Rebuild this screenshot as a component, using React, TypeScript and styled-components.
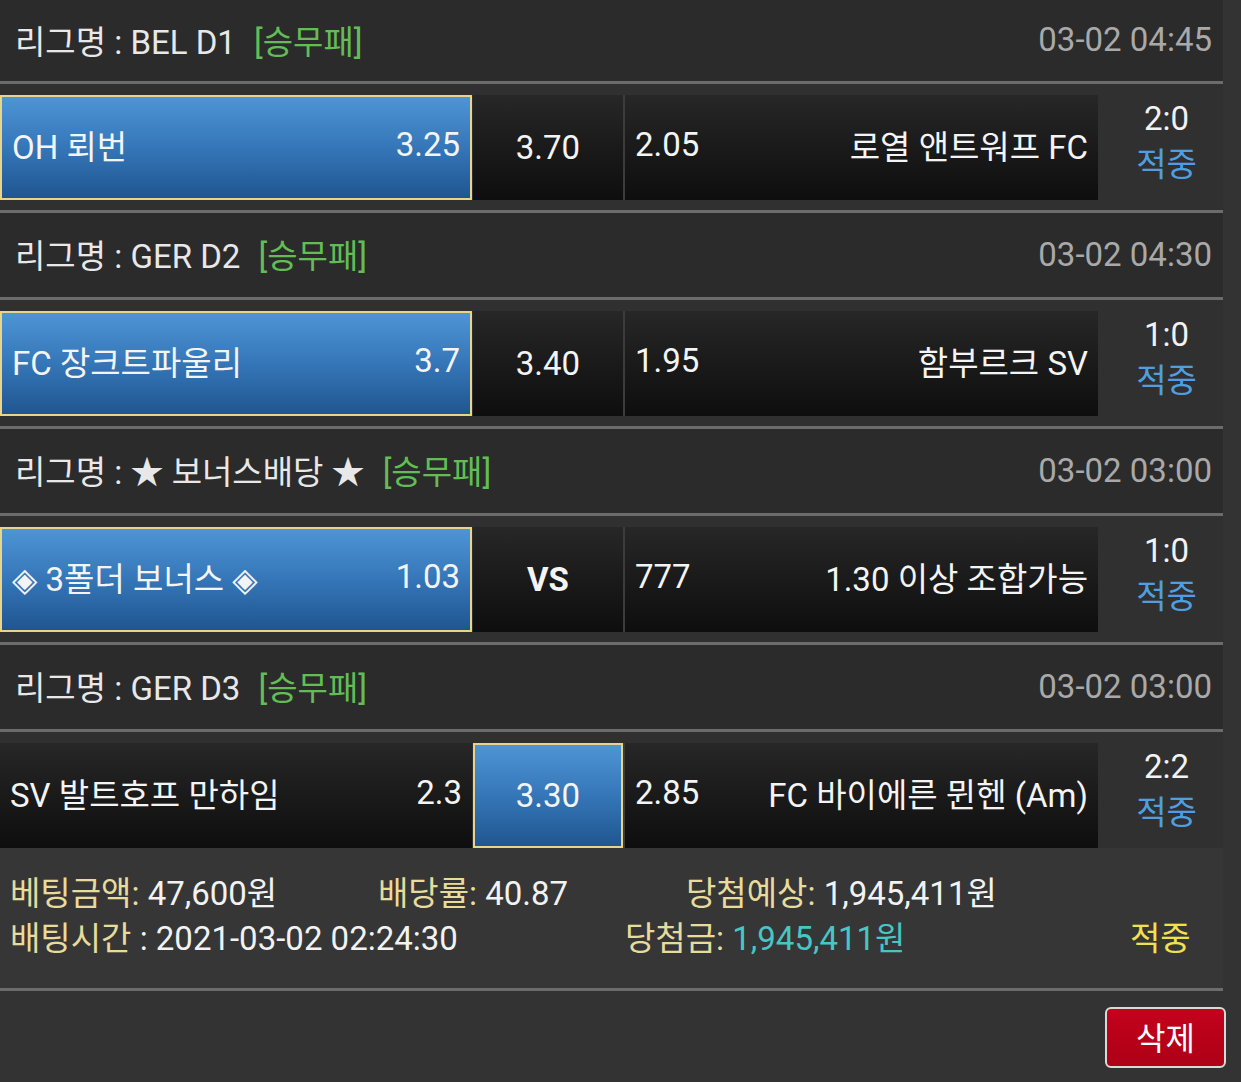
import React from 'react';
import styled, { createGlobalStyle } from 'styled-components';

const GlobalStyle = createGlobalStyle`
  body {
    margin: 0;
    background: #333333;
    font-family: Roboto, "Noto Sans CJK KR", "DejaVu Sans", sans-serif;
    color: #ececec;
  }
`;

const Page = styled.div`
  width: 1241px;
  height: 1082px;
  overflow: hidden;
  background: #333333;
  font-size: 33px;
`;

const Panel = styled.div`
  width: 1223px;
`;

const LeagueHeader = styled.div`
  height: 87px;
  box-sizing: border-box;
  background: #2b2b2b;
  border-bottom: 3px solid #6c6c6c;
  display: flex;
  align-items: center;
  justify-content: space-between;
  padding: 0 11px 2px 15px;
  &:first-child {
    height: 84px;
  }
`;

const LeagueName = styled.span`
  color: #e8e8e8;
  white-space: pre;
`;

const BetType = styled.span`
  color: #62bd55;
  margin-left: 18px;
`;

const MatchTime = styled.span`
  color: #a9a9a9;
`;

const MatchRow = styled.div<{ $last?: boolean }>`
  display: flex;
  padding: 11px 0 ${p => (p.$last ? '0' : '10px')};
  background: #303030;
  border-bottom: ${p => (p.$last ? 'none' : '3px solid #6c6c6c')};
`;

const OddsCell = styled.div<{ $selected?: boolean; $width: number; $align: 'between' | 'center' }>`
  width: ${p => p.$width}px;
  height: 105px;
  box-sizing: border-box;
  display: flex;
  align-items: center;
  justify-content: ${p => (p.$align === 'center' ? 'center' : 'space-between')};
  padding: 0 10px 6px;
  color: #f4f4f4;
  white-space: nowrap;
  background: ${p =>
    p.$selected
      ? 'linear-gradient(180deg, #4e95d6 0%, #3576b8 50%, #1f5690 100%)'
      : 'linear-gradient(180deg, #272727 0%, #1a1a1a 50%, #0e0e0e 100%)'};
  border: ${p => (p.$selected ? '2px solid #e9d48c' : 'none')};
`;

const AwayCell = styled(OddsCell)`
  border-left: 2px solid #3c3c3c;
`;

const Gap = styled.div`
  width: 1px;
`;

const DrawText = styled.span<{ $bold?: boolean }>`
  font-weight: ${p => (p.$bold ? 700 : 400)};
  padding-top: 6px;
`;

const ScoreCell = styled.div`
  flex: 1;
  display: flex;
  flex-direction: column;
  align-items: center;
  justify-content: center;
  padding: 0 0 12px 12px;
  line-height: 46px;
`;

const Score = styled.span`
  color: #f2f2f2;
`;

const Hit = styled.span`
  color: #4f9fe0;
`;

const Summary = styled.div`
  background: #363636;
  padding: 23px 0 27px 10px;
  border-bottom: 3px solid #6c6c6c;
  line-height: 45px;
`;

const SummaryLine = styled.div<{ $cols: string }>`
  display: grid;
  grid-template-columns: ${p => p.$cols};
  white-space: nowrap;
`;

const Label = styled.span`
  color: #e7dc9c;
`;

const Value = styled.span<{ $tone?: 'cyan' }>`
  color: ${p => (p.$tone === 'cyan' ? '#47c6c4' : '#f2f2f2')};
`;

const HitYellow = styled.span`
  color: #f1e14c;
`;

const Footer = styled.div`
  display: flex;
  justify-content: flex-end;
  padding: 16px 15px 0 0;
`;

const DeleteButton = styled.button`
  width: 121px;
  height: 61px;
  box-sizing: border-box;
  border: 2px solid #d9d9d9;
  border-radius: 6px;
  background: linear-gradient(180deg, #c4021d 0%, #ad0016 100%);
  color: #ffffff;
  font-family: inherit;
  font-size: 32px;
  padding: 0 0 4px;
`;

type Match = {
  league: string;
  time: string;
  home: string;
  homeOdds: string;
  draw: string;
  drawBold?: boolean;
  awayOdds: string;
  away: string;
  score: string;
  pick: 'home' | 'draw';
};

const matches: Match[] = [
  { league: '리그명 : BEL D1', time: '03-02 04:45', home: 'OH 뢰번', homeOdds: '3.25', draw: '3.70', awayOdds: '2.05', away: '로열 앤트워프 FC', score: '2:0', pick: 'home' },
  { league: '리그명 : GER D2', time: '03-02 04:30', home: 'FC 장크트파울리', homeOdds: '3.7', draw: '3.40', awayOdds: '1.95', away: '함부르크 SV', score: '1:0', pick: 'home' },
  { league: '리그명 : ★ 보너스배당 ★', time: '03-02 03:00', home: '◈ 3폴더 보너스 ◈', homeOdds: '1.03', draw: 'VS', drawBold: true, awayOdds: '777', away: '1.30 이상 조합가능', score: '1:0', pick: 'home' },
  { league: '리그명 : GER D3', time: '03-02 03:00', home: 'SV 발트호프 만하임', homeOdds: '2.3', draw: '3.30', awayOdds: '2.85', away: 'FC 바이에른 뮌헨 (Am)', score: '2:2', pick: 'draw' },
];

export default function App() {
  return (
    <Page>
      <GlobalStyle />
      <Panel>
        {matches.map((m, i) => (
          <React.Fragment key={i}>
            <LeagueHeader>
              <span>
                <LeagueName>{m.league}</LeagueName>
                <BetType>[승무패]</BetType>
              </span>
              <MatchTime>{m.time}</MatchTime>
            </LeagueHeader>
            <MatchRow $last={i === matches.length - 1}>
              <OddsCell $width={472} $align="between" $selected={m.pick === 'home'}>
                <span>{m.home}</span>
                <span>{m.homeOdds}</span>
              </OddsCell>
              <Gap />
              <OddsCell $width={150} $align="center" $selected={m.pick === 'draw'}>
                <DrawText $bold={m.drawBold}>{m.draw}</DrawText>
              </OddsCell>
              <AwayCell $width={475} $align="between">
                <span>{m.awayOdds}</span>
                <span>{m.away}</span>
              </AwayCell>
              <ScoreCell>
                <Score>{m.score}</Score>
                <Hit>적중</Hit>
              </ScoreCell>
            </MatchRow>
          </React.Fragment>
        ))}
        <Summary>
          <SummaryLine $cols="368px 308px 1fr">
            <span><Label>베팅금액:</Label> <Value>47,600원</Value></span>
            <span><Label>배당률:</Label> <Value>40.87</Value></span>
            <span><Label>당첨예상:</Label> <Value>1,945,411원</Value></span>
          </SummaryLine>
          <SummaryLine $cols="615px 505px 1fr">
            <span><Label>배팅시간</Label> <Value>: 2021-03-02 02:24:30</Value></span>
            <span><Label>당첨금:</Label> <Value $tone="cyan">1,945,411원</Value></span>
            <HitYellow>적중</HitYellow>
          </SummaryLine>
        </Summary>
      </Panel>
      <Footer>
        <DeleteButton>삭제</DeleteButton>
      </Footer>
    </Page>
  );
}
